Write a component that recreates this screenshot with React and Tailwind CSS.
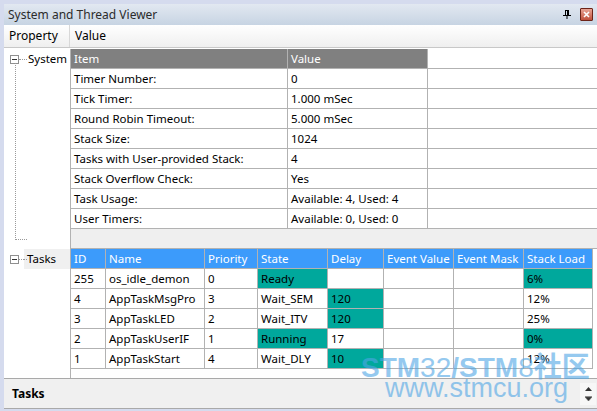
const systemRows = [
  ['Timer Number:', '0'],
  ['Tick Timer:', '1.000 mSec'],
  ['Round Robin Timeout:', '5.000 mSec'],
  ['Stack Size:', '1024'],
  ['Tasks with User-provided Stack:', '4'],
  ['Stack Overflow Check:', 'Yes'],
  ['Task Usage:', 'Available: 4, Used: 4'],
  ['User Timers:', 'Available: 0, Used: 0'],
];

const taskHead = ['ID', 'Name', 'Priority', 'State', 'Delay', 'Event Value', 'Event Mask', 'Stack Load'];

// cells marked with hi are the teal ones
const tasks = [
  ['255', 'os_idle_demon', '0', { v: 'Ready', hi: true }, '', '', '', { v: '6%', hi: true }],
  ['4', 'AppTaskMsgPro', '3', 'Wait_SEM', { v: '120', hi: true }, '', '', '12%'],
  ['3', 'AppTaskLED', '2', 'Wait_ITV', { v: '120', hi: true }, '', '', '25%'],
  ['2', 'AppTaskUserIF', '1', { v: 'Running', hi: true }, '17', '', '', { v: '0%', hi: true }],
  ['1', 'AppTaskStart', '4', 'Wait_DLY', { v: '10', hi: true }, '', '', '12%'],
];

const MinusBox = () => (
  <div className="w-[9px] h-[9px] border border-[#8f8f8f] bg-white flex items-center justify-center shrink-0">
    <div className="w-[5px] h-px bg-[#333]" />
  </div>
);

const Dots = ({ w }) => <div className={`${w} border-t border-dotted border-[#9a9a9a] shrink-0`} />;

const Cell = ({ children, hi, className = '' }) => (
  <div
    className={`h-[20px] border-b border-r border-[#b2b2b2] pl-[3px] leading-[19px] whitespace-nowrap overflow-hidden ${
      hi ? 'bg-[#00a89c]' : ''
    } ${className}`}
  >
    {children}
  </div>
);

export default function App() {
  return (
    <div className="w-[597px] h-[411px] overflow-hidden relative bg-[#d5dbee] pt-[4px] pl-[4px] pb-[2px] flex flex-col text-[11.5px] text-black font-['Noto_Sans',sans-serif]">
      {/* title bar */}
      <div className="h-[21px] shrink-0 flex items-center justify-between bg-gradient-to-b from-[#e2e8f1] to-[#c7d4e3] pl-[4px] pr-[4px]">
        <span className="text-[#2b2b2b] text-[12px]">System and Thread Viewer</span>
        <div className="flex items-center gap-[9px]">
          <svg width="8" height="9" viewBox="0 0 8 9">
            <path d="M2 0.5h4M2.5 0.5v5M5.5 0.5v5M0 5.5h8M4 5.5v3.5" stroke="#000" strokeWidth="1" fill="none" />
            <rect x="4" y="1" width="1.5" height="4.5" fill="#000" />
          </svg>
          <div className="w-[13px] h-[13px] border border-[#6d2418] rounded-[1px] bg-gradient-to-b from-[#e8a596] to-[#c0503c] flex items-center justify-center">
            <svg width="7" height="7" viewBox="0 0 7 7">
              <path d="M1 1l5 5M6 1l-5 5" stroke="#fff" strokeWidth="1.6" />
            </svg>
          </div>
        </div>
      </div>

      {/* property header */}
      <div className="h-[23px] shrink-0 flex bg-gradient-to-b from-white to-[#efefef] border-b border-[#c8c8c8] text-[12px]">
        <div className="w-[66px] border-r border-[#d8d8d8] pl-[5px] leading-[22px]">Property</div>
        <div className="pl-[5px] leading-[22px]">Value</div>
      </div>

      {/* content */}
      <div className="h-[330px] shrink-0 flex bg-white pt-px">
        {/* tree */}
        <div className="w-[66px] shrink-0 flex flex-col">
          <div className="h-[20px] flex items-center pl-[6px]">
            <MinusBox />
            <Dots w="w-[8px]" />
            <span className="pl-[1px]">System</span>
          </div>
          <div className="h-[180px] pl-[11px]">
            <div className="-mt-[6px] h-[177px] w-[12px] border-l border-b border-dotted border-[#9a9a9a]" />
          </div>
          <div className="h-[20px] flex items-center pl-[6px]">
            <MinusBox />
            <Dots w="w-[5px]" />
            <div className="flex-1 h-full bg-[#f0f0f0] flex items-center">
              <Dots w="w-[3px]" />
              <span>Tasks</span>
            </div>
          </div>
        </div>

        {/* grids */}
        <div className="flex-1 border-l border-[#b2b2b2] flex flex-col">
          <div className="grid grid-cols-[217px_140px_1fr]">
            <Cell className="bg-[#808080] text-white">Item</Cell>
            <Cell className="bg-[#808080] text-white">Value</Cell>
            <Cell className="border-r-0" />
            {systemRows.map(([k, v]) => [
              <Cell key={k}>{k}</Cell>,
              <Cell key={k + 'v'}>{v}</Cell>,
              <Cell key={k + 'e'} className="border-r-0" />,
            ])}
          </div>
          <div className="h-[20px] bg-[#efefef] border-b border-[#b2b2b2]" />
          <div className="grid grid-cols-[35px_99px_53px_70px_56px_70px_70px_69px] w-[522px]">
            {taskHead.map((h) => (
              <Cell key={h} className="bg-[#3c9bfb] text-white">
                {h}
              </Cell>
            ))}
            {tasks.map((row, i) =>
              row.map((c, j) =>
                typeof c === 'object' ? (
                  <Cell key={i + '-' + j} hi>
                    {c.v}
                  </Cell>
                ) : (
                  <Cell key={i + '-' + j}>{c}</Cell>
                )
              )
            )}
          </div>
        </div>
      </div>

      {/* bottom panel */}
      <div className="h-[31px] shrink-0 flex items-center justify-between bg-[#f0f0f0] border-t border-b border-[#a9a9a9]">
        <span className="pl-[8px] font-bold text-[12px]">Tasks</span>
        <div className="w-[16px] h-[22px] bg-[#f7f7f7] flex flex-col items-center justify-center gap-[5px] mr-[1px]">
          <svg width="7" height="4" viewBox="0 0 7 4">
            <path d="M3.5 0L7 4H0z" fill="#333" />
          </svg>
          <svg width="7" height="5" viewBox="0 0 7 5">
            <path d="M0 0.5h7M0 1L7 1L3.5 5z" stroke="#666" strokeWidth="0.6" fill="#333" />
          </svg>
        </div>
      </div>

      {/* site watermark over the table */}
      <div className="absolute left-[361px] top-[351px] pointer-events-none text-[#4fa6e6] opacity-60 font-['Liberation_Sans',sans-serif] leading-none">
        <div className="text-[28px] whitespace-nowrap">
          <span className="font-bold">STM</span>
          <span className="font-normal">32</span>
          <span className="font-bold">/STM</span>
          <span className="font-normal">8</span>
          <span className="font-bold font-['Noto_Sans_CJK_SC',sans-serif]">社区</span>
        </div>
        <div className="text-[27px] whitespace-nowrap pl-[24px] -mt-[7px]">www.stmcu.org</div>
      </div>
    </div>
  );
}
